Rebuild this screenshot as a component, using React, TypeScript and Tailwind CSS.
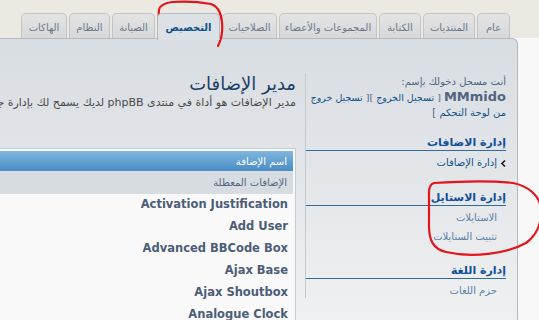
import React from 'react';

const tabs = [
  { label: 'عام', w: 'w-[33px]' },
  { label: 'المنتديات', w: 'w-[52px]' },
  { label: 'الكتابة', w: 'w-[42px]' },
  { label: 'المجموعات والأعضاء', w: 'w-[98px]' },
  { label: 'الصلاحيات', w: 'w-[55px]' },
  { label: 'التخصيص', w: 'w-[63px]', active: true },
  { label: 'الصيانة', w: 'w-[43px]' },
  { label: 'النظام', w: 'w-[41px]' },
  { label: 'الهاكات', w: 'w-[46px]' },
];

const mods = [
  'Activation Justification',
  'Add User',
  'Advanced BBCode Box',
  'Ajax Base',
  'Ajax Shoutbox',
  'Analogue Clock',
];

export default function App() {
  return (
    <div
      dir="rtl"
      className="relative w-[539px] h-[320px] overflow-hidden bg-[#f8f8f8] font-['DejaVu_Sans',sans-serif]"
    >
      {/* tab bar */}
      <div className="h-[38px] bg-[#ece9e2] flex items-end gap-[2px] pr-[29px]">
        {tabs.map((t) =>
          t.active ? (
            <div
              key={t.label}
              className={`${t.w} relative z-10 h-[27px] -mb-[2px] shrink-0 rounded-t-[5px] border border-b-0 border-[#b3b9bf] bg-[#dce1e5] flex items-center justify-center pt-[1px] text-[10px] font-bold text-[#105289]`}
            >
              {t.label}
            </div>
          ) : (
            <div
              key={t.label}
              className={`${t.w} h-[25px] shrink-0 rounded-t-[5px] border border-b-0 border-[#c2c4c6] bg-gradient-to-b from-[#e4e4e4] to-[#d6d8da] flex items-center justify-center pt-[2px] text-[10px] text-[#6d7889] whitespace-nowrap`}
            >
              {t.label}
            </div>
          )
        )}
      </div>

      {/* panel */}
      <div className="mr-[21px] w-[900px] h-[282px] border border-b-0 border-[#b3b9bf] rounded-tr-[6px] bg-gradient-to-b from-[#d8dde2] to-[#eff0f1] flex">
        {/* sidebar */}
        <div className="w-[212px] shrink-0 mt-[34px] h-[225px] border-l border-[#c3c9cf] pr-[11px] pt-[1px]">
          <div className="text-[10px] leading-[15px] text-[#536482] whitespace-nowrap">
            <div>أنت مسجل دخولك بإسم:</div>
            <div className="text-[9.5px]">
              <b className="text-[13px] text-[#536482]">MMmido</b> [&nbsp;
              <span className="text-[#105289]">تسجيل الخروج</span>&nbsp;][&nbsp;
              <span className="text-[#105289]">تسجيل خروج</span>
            </div>
            <div>
              <span className="text-[#105289]">من لوحة التحكم</span>&nbsp;]
            </div>
          </div>

          <h3 className="mt-[16px] text-[11px] leading-[14px] font-bold text-[#115098] border-b border-[#336c9b]">
            إدارة الاضافات
          </h3>
          <div className="mt-[4px] flex items-center gap-[4px] text-[10px] leading-[16px] text-[#105289]">
            <svg width="5" height="7" viewBox="0 0 5 7" className="shrink-0">
              <path d="M4 0.5 L1 3.5 L4 6.5" fill="none" stroke="#222" strokeWidth="1.6" />
            </svg>
            <span>إدارة الإضافات</span>
          </div>

          <h3 className="mt-[20px] text-[11px] leading-[14px] font-bold text-[#115098] border-b border-[#336c9b]">
            إدارة الاستايل
          </h3>
          <div className="mt-[2px] pr-[9px] text-[10px] leading-[19px] text-[#5a7fa6]">
            <div>الاستايلات</div>
            <div>تثبيت الستايلات</div>
          </div>

          <h3 className="mt-[18px] text-[11px] leading-[14px] font-bold text-[#115098] border-b border-[#336c9b]">
            إدارة اللغة
          </h3>
          <div className="mt-[2px] pr-[9px] text-[10px] leading-[19px] text-[#5a7fa6]">
            <div>حزم اللغات</div>
          </div>
        </div>

        {/* main */}
        <div className="flex-1 pr-[9px] pt-[33px]">
          <h1 className="text-[18px] leading-[23px] text-[#1d3d66]">مدير الإضافات</h1>
          <p className="text-[11px] leading-[16px] text-[#4a4a4a] whitespace-nowrap">
            مدير الإضافات هو أداة في منتدى phpBB لديك يسمح لك بإدارة جميع الإضافات الخاصة بك بسهولة وسرعة.
          </p>

          <div className="mt-[37px] border border-[#c5ccd3] bg-[#f9f9f9] p-[2px] pb-0">
            <div className="h-[20px] bg-gradient-to-b from-[#7fb6df] to-[#4a8cc4] flex items-center pr-[6px] text-[10px] text-white">
              اسم الإضافة
            </div>
            <div className="h-[23px] bg-[#d7dce1] flex items-center pr-[6px] text-[10px] text-[#536482]">
              الإضافات المعطلة
            </div>
            {mods.map((m) => (
              <div
                key={m}
                className="h-[22px] flex items-center pr-[5px] text-[11.5px] font-bold text-[#4c5d77]"
              >
                {m}
              </div>
            ))}
          </div>
        </div>
      </div>

      {/* red hand-drawn annotations */}
      <svg
        className="absolute inset-0 pointer-events-none"
        width="539"
        height="320"
        viewBox="0 0 539 320"
      >
        <path
          d="M163,36 C160,28 158,18 159,10 C160,5 164,3 172,2 C185,1 200,2 211,4 C219,7 221,14 222,22 C223,32 221,40 218,46"
          fill="none"
          stroke="#e3141b"
          strokeWidth="2.2"
          strokeLinecap="round"
        />
        <path
          d="M434,183 C465,181 495,181 513,183 C528,186 539,195 541,208 C542,222 537,235 526,243 C506,254 472,258 446,252 C433,249 429,240 429,226 L429,192 C429,187 431,184 434,183"
          fill="none"
          stroke="#e3141b"
          strokeWidth="2.2"
          strokeLinecap="round"
        />
      </svg>
    </div>
  );
}
